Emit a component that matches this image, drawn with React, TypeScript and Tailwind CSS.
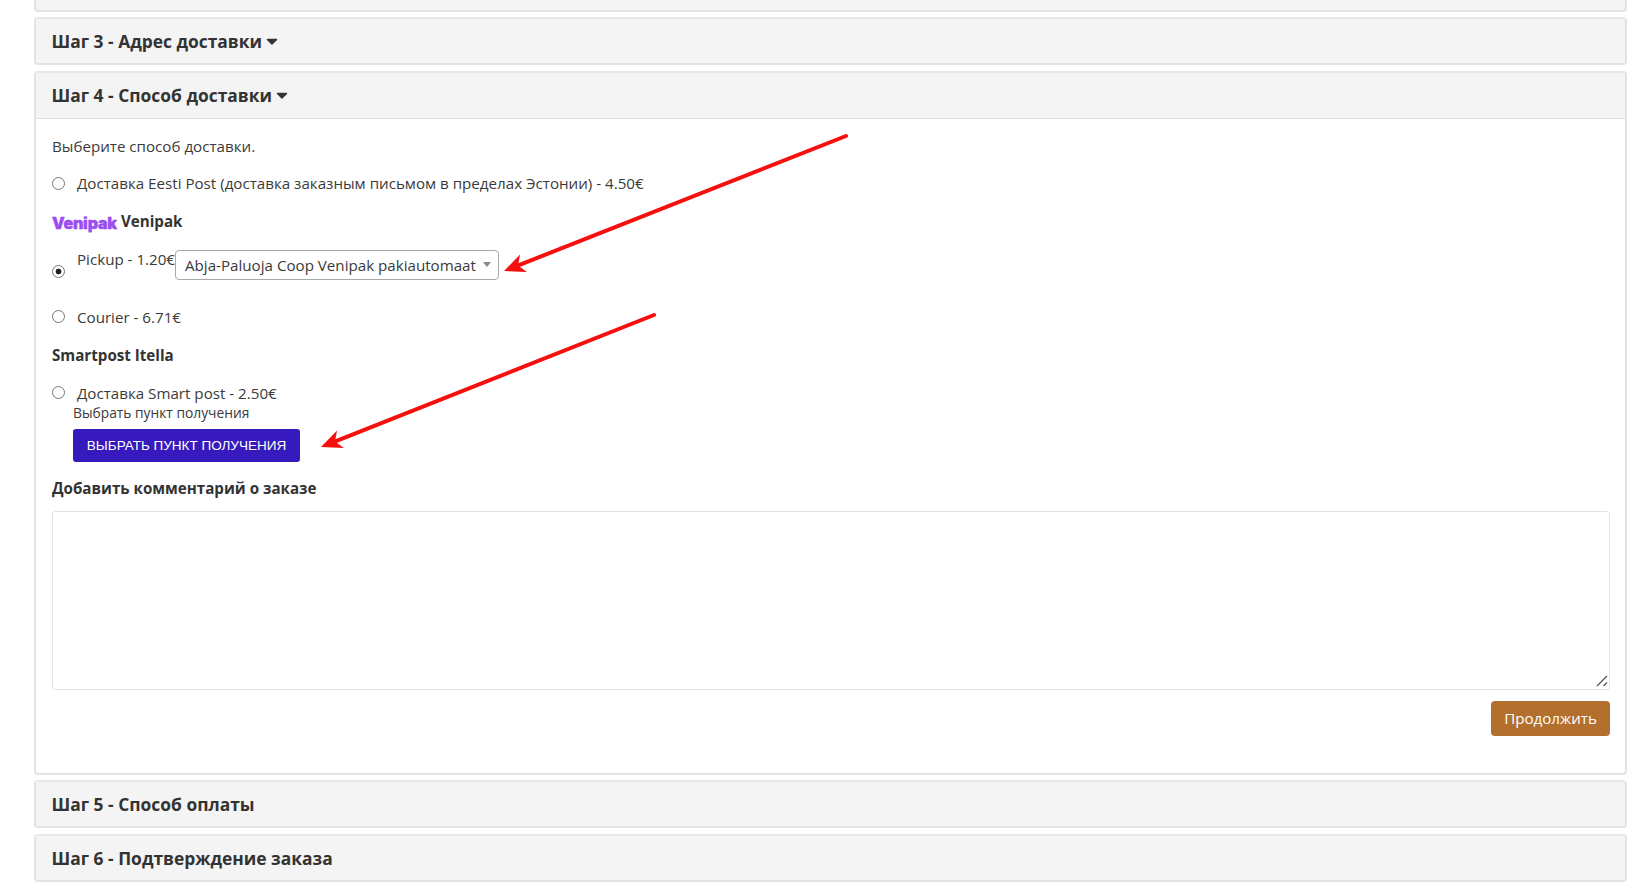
import React from 'react';
import { FaCaretDown } from 'react-icons/fa';

function StepHeader({ title, caret, open }: { title: string; caret?: boolean; open?: boolean }) {
  return (
    <div className={`flex items-center bg-[#f4f4f4] pl-[15.5px] pr-4 ${open ? 'h-[46px] border-b border-[#dfdfdf] pb-px' : 'h-[44px]'}`}>
      <h3 className="text-[17.4px] font-bold leading-6 text-[#333]">{title}</h3>
      {caret && <FaCaretDown className="ml-[4px] h-[18px] w-[12px] text-[#333]" />}
    </div>
  );
}

function StepCard({ title, caret, className = '' }: { title: string; caret?: boolean; className?: string }) {
  return (
    <section className={`rounded-[4px] border-2 border-[#e3e3e3] border-t-[#e8e8e8] ${className}`}>
      <StepHeader title={title} caret={caret} />
    </section>
  );
}

function Radio({ checked, className = '' }: { checked?: boolean; className?: string }) {
  return (
    <input
      type="radio"
      readOnly
      checked={!!checked}
      className={`h-[13px] w-[13px] shrink-0 appearance-none rounded-full border border-[#767676] bg-white checked:bg-[radial-gradient(circle,#1f1f1f_0,#1f1f1f_2.6px,transparent_3.2px)] ${className}`}
    />
  );
}

function Arrow({ x1, y1, x2, y2 }: { x1: number; y1: number; x2: number; y2: number }) {
  // arrowhead: swept back triangle at the tip
  const a = Math.atan2(y1 - y2, x1 - x2);
  const p = (len: number, off: number) =>
    `${x2 + Math.cos(a + off) * len},${y2 + Math.sin(a + off) * len}`;
  return (
    <>
      <line
        x1={x1}
        y1={y1}
        x2={x2 + Math.cos(a) * 14}
        y2={y2 + Math.sin(a) * 14}
        stroke="#f60f0f"
        strokeWidth="4"
        strokeLinecap="round"
      />
      <polygon points={`${x2},${y2} ${p(23, 0.42)} ${p(15, 0)} ${p(23, -0.42)}`} fill="#f60f0f" />
    </>
  );
}

export default function App() {
  return (
    <div className="relative h-[883px] overflow-hidden bg-white font-['Open_Sans',sans-serif] text-[15.15px] text-[#3a3a3a]">
      <div className="ml-[34px] mr-[18px]">
        <div className="mb-[5px] h-[12px] rounded-b-[4px] border-2 border-t-0 border-[#e3e3e3] bg-[#f4f4f4]" />
        <StepCard title="Шаг 3 - Адрес доставки" caret className="mb-[6px]" />

        <section className="mb-[5px] h-[704px] rounded-[4px] border-2 border-[#e3e3e3] border-t-[#e8e8e8]">
          <StepHeader title="Шаг 4 - Способ доставки" caret open />
          <div className="pl-[16px] pr-[15px] pt-[15px]">
            <p className="leading-6">Выберите способ доставки.</p>

            <label className="mt-[13px] flex h-6 items-center">
              <Radio />
              <span className="ml-[12px]">Доставка Eesti Post (доставка заказным письмом в пределах Эстонии) - 4.50€</span>
            </label>

            <div className="mt-[14px] flex h-6 items-center font-bold text-[#333]">
              <span className="mt-[3px] w-[65px] font-['Inter',sans-serif] text-[16px] font-black leading-none tracking-[-0.2px] text-[#9b4df2] [-webkit-text-stroke:0.4px_#9b4df2]">
                Venipak
              </span>
              <span className="ml-[4px]">Venipak</span>
            </div>

            <div className="mt-[17px] flex h-[30px] items-start">
              <Radio checked className="mt-[15px]" />
              <span className="-mt-px ml-[12px] leading-5">Pickup - 1.20€</span>
              <div className="flex h-[30px] w-[324px] items-center rounded-[4px] border border-[#a8a8a8] pl-[9px] pr-[7px]">
                <span className="flex-1">Abja-Paluoja Coop Venipak pakiautomaat</span>
                <span className="h-0 w-0 -translate-y-[1px] border-x-[4px] border-t-[5px] border-x-transparent border-t-[#888]" />
              </div>
            </div>

            <label className="mt-[25px] flex h-6 items-center">
              <Radio className="-mt-px" />
              <span className="ml-[12px]">Courier - 6.71€</span>
            </label>

            <p className="mt-[14px] h-6 font-bold leading-6 text-[#333]">Smartpost Itella</p>

            <label className="mt-[14px] flex h-6 items-center">
              <Radio className="-mt-px" />
              <span className="ml-[12px]">Доставка Smart post - 2.50€</span>
            </label>

            <div className="-mt-px ml-[21px]">
              <p className="text-[13.8px] leading-[18px]">Выбрать пункт получения</p>
              <button className="mt-[7px] flex h-[33px] w-[227px] items-center justify-center rounded-[3px] bg-[#361abd] pt-px font-['Liberation_Sans',sans-serif] text-[13.5px] uppercase text-white">
                Выбрать пункт получения
              </button>
            </div>

            <p className="mt-[14px] h-6 font-bold leading-6 text-[#333]">Добавить комментарий о заказе</p>

            <div className="relative mt-[11px]">
              <textarea
                readOnly
                className="block h-[179px] w-full resize-none rounded-[3px] border border-[#e3e3e3] bg-white"
              />
              {/* resize grip */}
              <svg className="absolute bottom-[3px] right-[2px]" width="12" height="12" viewBox="0 0 12 12" aria-hidden="true">
                <path d="M1 11 11 1M7.5 11 11 7.5" stroke="#555" strokeWidth="1.3" fill="none" />
              </svg>
            </div>

            <div className="mt-[11px] flex justify-end">
              <button className="h-[35px] w-[119px] rounded-[4px] bg-[#b36f2e] text-white">Продолжить</button>
            </div>
          </div>
        </section>

        <StepCard title="Шаг 5 - Способ оплаты" className="mb-[6px]" />
        <StepCard title="Шаг 6 - Подтверждение заказа" />
      </div>

      {/* annotation arrows drawn over the screenshot */}
      <svg className="pointer-events-none absolute inset-0" width="1645" height="883" aria-hidden="true">
        <Arrow x1={846} y1={136} x2={504} y2={271} />
        <Arrow x1={654} y1={315} x2={321} y2={447} />
      </svg>
    </div>
  );
}
